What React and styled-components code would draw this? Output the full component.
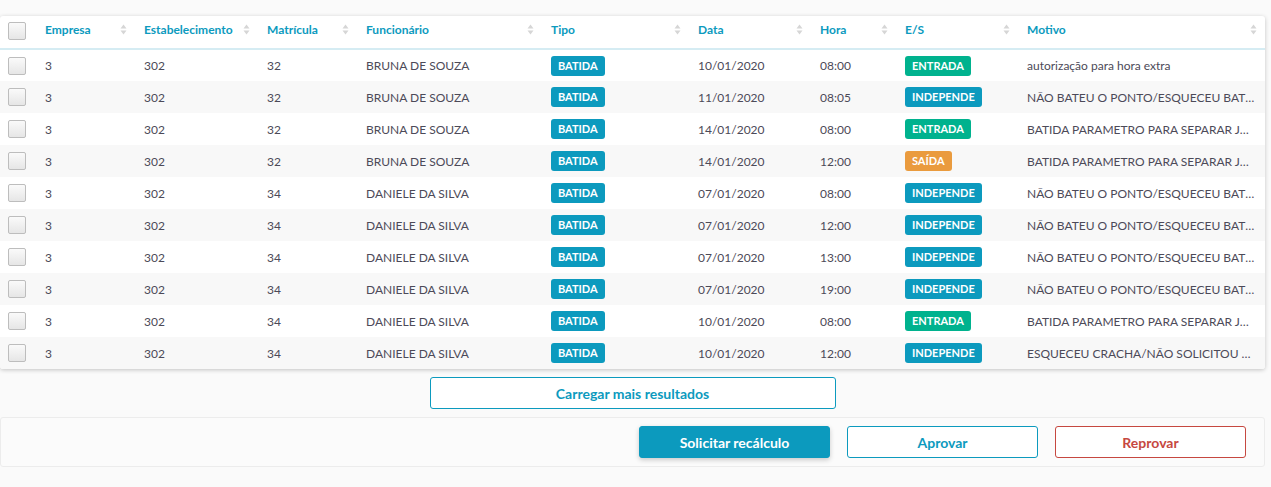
import React from 'react';
import styled, { createGlobalStyle } from 'styled-components';

const GlobalStyle = createGlobalStyle`
  html, body {
    margin: 0;
    padding: 0;
    background: #fafafa;
    font-family: "Lato", "Open Sans", sans-serif;
  }
  * { box-sizing: border-box; }
`;

const Page = styled.div`
  width: 1271px;
  padding: 16px 6px 0 0;
  display: flex;
  flex-direction: column;
`;

const Card = styled.div`
  background: #fff;
  border-radius: 3px;
  box-shadow: 0 1px 4px rgba(0, 0, 0, 0.22);
  overflow: hidden;
`;

const Table = styled.table`
  width: 100%;
  border-collapse: collapse;
  table-layout: fixed;
`;

const Th = styled.th`
  height: 33px;
  padding: 0 8px 5px 9px;
  text-align: left;
  font-size: 12px;
  font-weight: 700;
  color: #0c9abe;
  border-bottom: 2px solid #d5ecf3;
  white-space: nowrap;
`;

const HeadInner = styled.div`
  display: flex;
  align-items: center;
  justify-content: space-between;
`;

const Row = styled.tr`
  background: ${({ $odd }) => ($odd ? '#f8f8f8' : '#fff')};
  & + & td { border-top: 1px solid #e6e6e6; }
`;

const Td = styled.td`
  height: 32px;
  padding: 0 8px 0 9px;
  font-size: 12px;
  color: #4c4a58;
  white-space: nowrap;
  overflow: hidden;
  text-overflow: ellipsis;
`;

const CheckCell = styled.td`
  padding: 0 0 0 8px;
  height: 32px;
`;

const CheckHead = styled.th`
  padding: 0 0 3px 8px;
  height: 33px;
  text-align: left;
  border-bottom: 2px solid #d5ecf3;
`;

const Checkbox = styled.span`
  display: block;
  width: 18px;
  height: 18px;
  border: 1px solid #bdbdbd;
  border-radius: 2px;
  background: linear-gradient(#fafafa, #e6e6e6);
`;

const Badge = styled.span`
  display: inline-block;
  height: 20px;
  line-height: 20px;
  padding: 0 7px;
  border-radius: 3px;
  font-size: 11px;
  font-weight: 700;
  color: #fff;
  background: ${({ $color }) => $color};
`;

const Center = styled.div`
  display: flex;
  justify-content: center;
  padding: 8px 0 8px;
`;

const Button = styled.button`
  width: ${({ $w }) => $w || 191}px;
  height: 32px;
  border-radius: 3px;
  font-family: inherit;
  font-size: 14px;
  font-weight: 700;
  cursor: pointer;
  background: ${({ $primary }) => ($primary ? '#0c9abe' : '#fff')};
  color: ${({ $primary, $danger }) => ($primary ? '#fff' : $danger ? '#c64840' : '#0c9abe')};
  border: 1px solid ${({ $danger }) => ($danger ? '#c64840' : '#0c9abe')};
  box-shadow: ${({ $primary }) => ($primary ? '0 2px 5px rgba(0,0,0,0.2)' : 'none')};
`;

const Footer = styled.div`
  display: flex;
  justify-content: flex-end;
  gap: 17px;
  padding: 8px 18px 8px 0;
  border: 1px solid #ececec;
  border-radius: 3px;
  background: #fbfbfb;
`;

const SortIcon = () => (
  <svg width="7" height="11" viewBox="0 0 7 11">
    <path d="M3.5 0.5 L6.5 4.5 H0.5 Z" fill="#d6d6d6" />
    <path d="M3.5 10.5 L6.5 6.5 H0.5 Z" fill="#d6d6d6" />
  </svg>
);

const columns = [
  ['Empresa', 99],
  ['Estabelecimento', 123],
  ['Matrícula', 99],
  ['Funcionário', 185],
  ['Tipo', 147],
  ['Data', 122],
  ['Hora', 85],
  ['E/S', 122],
  ['Motivo', null],
];

const es = {
  ENTRADA: '#00b28e',
  INDEPENDE: '#0c9abe',
  'SAÍDA': '#ea9b3e',
};

const rows = [
  ['32', 'BRUNA DE SOUZA', '10/01/2020', '08:00', 'ENTRADA', 'autorização para hora extra'],
  ['32', 'BRUNA DE SOUZA', '11/01/2020', '08:05', 'INDEPENDE', 'NÃO BATEU O PONTO/ESQUECEU BATER O PONTO'],
  ['32', 'BRUNA DE SOUZA', '14/01/2020', '08:00', 'ENTRADA', 'BATIDA PARAMETRO PARA SEPARAR  JORNADA'],
  ['32', 'BRUNA DE SOUZA', '14/01/2020', '12:00', 'SAÍDA', 'BATIDA PARAMETRO PARA SEPARAR  JORNADA'],
  ['34', 'DANIELE DA SILVA', '07/01/2020', '08:00', 'INDEPENDE', 'NÃO BATEU O PONTO/ESQUECEU BATER O PONTO'],
  ['34', 'DANIELE DA SILVA', '07/01/2020', '12:00', 'INDEPENDE', 'NÃO BATEU O PONTO/ESQUECEU BATER O PONTO'],
  ['34', 'DANIELE DA SILVA', '07/01/2020', '13:00', 'INDEPENDE', 'NÃO BATEU O PONTO/ESQUECEU BATER O PONTO'],
  ['34', 'DANIELE DA SILVA', '07/01/2020', '19:00', 'INDEPENDE', 'NÃO BATEU O PONTO/ESQUECEU BATER O PONTO'],
  ['34', 'DANIELE DA SILVA', '10/01/2020', '08:00', 'ENTRADA', 'BATIDA PARAMETRO PARA SEPARAR  JORNADA'],
  ['34', 'DANIELE DA SILVA', '10/01/2020', '12:00', 'INDEPENDE', 'ESQUECEU CRACHA/NÃO SOLICITOU CRACHA'],
];

const App = () => (
  <>
    <GlobalStyle />
    <Page>
      <Card>
        <Table>
          <colgroup>
            <col style={{ width: 36 }} />
            {columns.map(([name, w]) => (
              <col key={name} style={w ? { width: w } : undefined} />
            ))}
          </colgroup>
          <thead>
            <tr>
              <CheckHead><Checkbox /></CheckHead>
              {columns.map(([name]) => (
                <Th key={name}>
                  <HeadInner>
                    {name}
                    <SortIcon />
                  </HeadInner>
                </Th>
              ))}
            </tr>
          </thead>
          <tbody>
            {rows.map((r, i) => (
              <Row key={i} $odd={i % 2 === 1}>
                <CheckCell><Checkbox /></CheckCell>
                <Td>3</Td>
                <Td>302</Td>
                <Td>{r[0]}</Td>
                <Td>{r[1]}</Td>
                <Td><Badge $color="#0c9abe">BATIDA</Badge></Td>
                <Td>{r[2]}</Td>
                <Td>{r[3]}</Td>
                <Td><Badge $color={es[r[4]]}>{r[4]}</Badge></Td>
                <Td>{r[5]}</Td>
              </Row>
            ))}
          </tbody>
        </Table>
      </Card>
      <Center>
        <Button $w={406}>Carregar mais resultados</Button>
      </Center>
      <Footer>
        <Button $primary>Solicitar recálculo</Button>
        <Button>Aprovar</Button>
        <Button $danger>Reprovar</Button>
      </Footer>
    </Page>
  </>
);

export default App;
